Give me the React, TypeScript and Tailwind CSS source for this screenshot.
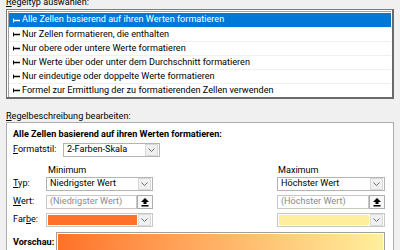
import React from 'react';

const rules = [
  'Alle Zellen basierend auf ihren Werten formatieren',
  'Nur Zellen formatieren, die enthalten',
  'Nur obere oder untere Werte formatieren',
  'Nur Werte über oder unter dem Durchschnitt formatieren',
  'Nur eindeutige oder doppelte Werte formatieren',
  'Formel zur Ermittlung der zu formatierenden Zellen verwenden',
];

const Pointer = ({ light }: { light?: boolean }) => (
  <svg width="7" height="5" viewBox="0 0 7 5" className="shrink-0">
    <rect x="0" y="0.5" width="1" height="4" fill={light ? '#ffffff' : '#000000'} />
    <rect x="1" y="1.75" width="6" height="1.5" fill={light ? '#ffffff' : '#000000'} />
  </svg>
);

const Chevron = () => (
  <div className="flex h-full w-[13px] items-center justify-center border border-[#d9d9d9] bg-[#f0f0f0]">
    <svg width="7" height="4" viewBox="0 0 7 4">
      <polyline points="0.5,0.5 3.5,3.5 6.5,0.5" fill="none" stroke="#6d6d6d" strokeWidth="1" />
    </svg>
  </div>
);

const UpButton = () => (
  <div className="flex h-[14px] w-[16px] shrink-0 items-center justify-center border border-[#adadad] bg-[#f7f7f7]">
    <svg width="8" height="9" viewBox="0 0 8 9">
      <polygon points="4,0 8,4 5.5,4 5.5,6 2.5,6 2.5,4 0,4" fill="#000" />
      <rect x="0.5" y="7" width="7" height="1.5" fill="#000" />
    </svg>
  </div>
);

const Combo = ({ text, width }: { text: string; width: string }) => (
  <div className={`flex h-[14px] shrink-0 items-center border border-[#b4b4b4] bg-white pl-[3px] ${width}`}>
    <span className="flex-1 truncate leading-none">{text}</span>
    <div className="h-[12px] pr-[1px]">
      <Chevron />
    </div>
  </div>
);

const ValueBox = ({ text, width }: { text: string; width: string }) => (
  <div className={`flex h-[14px] shrink-0 items-center ${width}`}>
    <div className="flex h-[14px] flex-1 items-center border border-[#c8c8c8] bg-white pl-[3px] text-[#8a8a8a]">
      <span className="leading-none">{text}</span>
    </div>
    <UpButton />
  </div>
);

const ColorBox = ({ color, width }: { color: string; width: string }) => (
  <div className={`flex h-[14px] shrink-0 items-center border border-[#c8c8c8] bg-white pr-[1px] ${width}`}>
    <div className="mx-[1px] h-[10px] flex-1" style={{ backgroundColor: color }} />
    <div className="h-[12px]">
      <Chevron />
    </div>
  </div>
);

const Row = ({ label, children, mt }: { label: React.ReactNode; children: React.ReactNode; mt: string }) => (
  <div className={`flex h-[14px] items-center ${mt}`}>
    <div className="w-[33px] shrink-0">{label}</div>
    {children}
  </div>
);

export default function App() {
  return (
    <div
      className="h-[250px] w-[400px] overflow-hidden bg-[#f0f0f0] text-[9.1px] text-black"
      style={{ fontFamily: 'Roboto, "Noto Sans", sans-serif' }}
    >
      <div className="-mt-[4px] ml-[6px] h-[13px] leading-[13px]">
        <span className="underline">R</span>egeltyp auswählen:
      </div>

      <div className="ml-[6px] w-[388px] border border-b-2 border-r-2 border-[#7a7a7a] border-b-[#6a6a6a] border-r-[#6a6a6a] bg-white pb-0 pl-[1px] pr-[1px] pt-[1px]">
        <div className="border-l border-t border-[#a0a0a0] pt-[1px]">
          {rules.map((r, i) => (
            <div
              key={r}
              className={`flex h-[14px] items-center gap-[2px] pl-[4px] ${
                i === 0 ? 'bg-[#0078d7] text-white' : 'border-t border-[#f0f0f0]'
              }`}
            >
              <Pointer light={i === 0} />
              <span className="whitespace-nowrap leading-none">{r}</span>
            </div>
          ))}
        </div>
      </div>

      <div className="ml-[6px] mt-[11px] h-[12px] leading-[12px]">
        <span className="underline">R</span>egelbeschreibung bearbeiten:
      </div>

      <div className="ml-[6px] h-[140px] w-[388px] border border-[#adadad] bg-white pl-[6px] pr-[8px] pt-[5px]">
        <div className="h-[12px] whitespace-nowrap font-bold leading-[12px]">
          Alle Zellen basierend auf ihren Werten formatieren:
        </div>

        <div className="mt-[3px] flex h-[14px] items-center">
          <div className="w-[50px] shrink-0">
            <span className="underline">F</span>ormatstil:
          </div>
          <Combo text="2-Farben-Skala" width="w-[97px]" />
        </div>

        <div className="mt-[7px] flex h-[12px] items-center leading-[12px]">
          <div className="w-[35px] shrink-0" />
          <div className="w-[230px] shrink-0">Minimum</div>
          <div>Maximum</div>
        </div>

        <Row mt="mt-[1px]" label={<><span className="underline">T</span>yp:</>}>
          <Combo text="Niedrigster Wert" width="w-[107px]" />
          <div className="flex-1" />
          <Combo text="Höchster Wert" width="w-[108px]" />
        </Row>

        <Row mt="mt-[4px]" label={<><span className="underline">W</span>ert:</>}>
          <ValueBox text="(Niedrigster Wert)" width="w-[107px]" />
          <div className="flex-1" />
          <ValueBox text="(Höchster Wert)" width="w-[108px]" />
        </Row>

        <Row mt="mt-[4px]" label={<>Far<span className="underline">b</span>e:</>}>
          <ColorBox color="#ff7128" width="w-[107px]" />
          <div className="flex-1" />
          <ColorBox color="#ffef9c" width="w-[108px]" />
        </Row>

        <div className="mt-[5px] flex items-start">
          <div className="w-[43px] shrink-0 whitespace-nowrap pt-[4px] font-bold leading-[12px]">Vorschau:</div>
          <div className="h-[30px] flex-1 border border-[#a0a0a0] p-[1px]">
            <div className="h-full w-full bg-gradient-to-r from-[#ff7128] to-[#ffef9c]" />
          </div>
        </div>
      </div>
    </div>
  );
}
